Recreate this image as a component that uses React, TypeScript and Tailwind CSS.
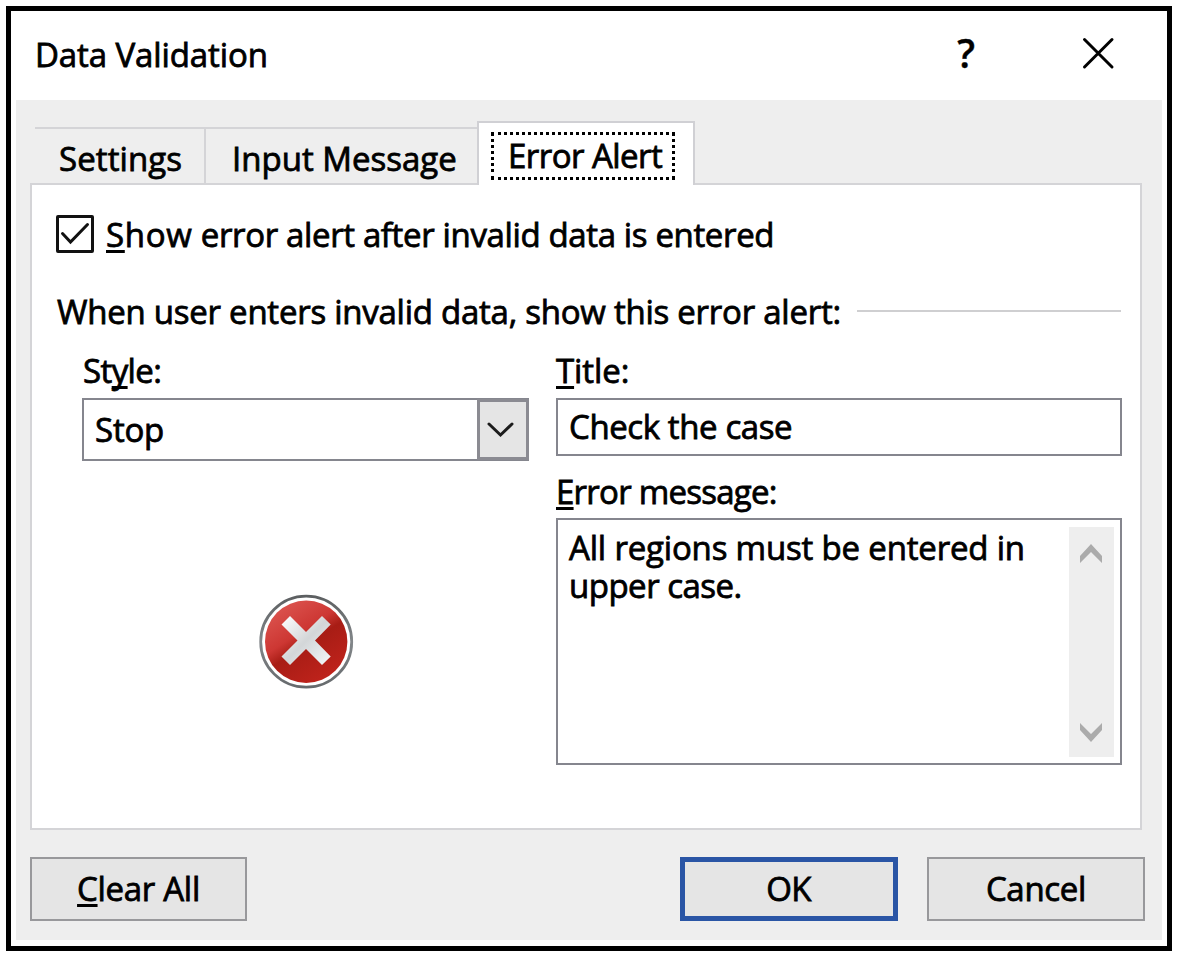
import type { ReactNode } from "react";

function Key({ children }: { children: ReactNode }) {
  return (
    <span className="underline decoration-[3px] underline-offset-[3px] [text-decoration-skip-ink:none]">{children}</span>
  );
}

function TitleBar() {
  return (
    <header className="flex h-[89px] shrink-0 items-start pl-[24px] pt-[21px]">
      <h1 className="w-[920px] shrink-0 tracking-[-0.1px]">Data Validation</h1>
      <button aria-label="Help" className="w-[22px] shrink-0 text-[39px] font-semibold leading-[42px] [-webkit-text-stroke:0.4px_#000]">
        ?
      </button>
      <button aria-label="Close" className="ml-[103px] mt-[3px]">
        <svg width="36" height="36" viewBox="0 0 36 36" fill="none" stroke="#000" strokeWidth="3" strokeLinecap="round">
          <path d="M4.5 4.5 32 32M32 4.5 4.5 32" />
        </svg>
      </button>
    </header>
  );
}

function Tabs() {
  return (
    <div className="flex items-end pl-[5px]">
      <button className="flex h-[56px] w-[171px] items-start border-r-2 border-t-2 border-[#d4d4d7] pl-[24px] pt-[7px] tracking-[0.1px]">
        Settings
      </button>
      <button className="flex h-[56px] w-[271px] items-start whitespace-nowrap border-t-2 border-[#d4d4d7] pl-[26px] pt-[7px]">
        Input Message
      </button>
      <button className="relative -mb-[2px] flex h-[64px] w-[218px] items-start whitespace-nowrap border-2 border-b-0 border-[#d0d0d4] bg-white pl-[12px] pt-[9px] tracking-[-0.54px]">
        <span className="block h-[48px] w-[184px] border-[3px] border-dotted border-black pl-[14px] text-left leading-[42px]">
          Error Alert
        </span>
      </button>
    </div>
  );
}

function StopIcon() {
  return (
    <svg width="96" height="96" viewBox="258 594 96 96">
      <defs>
        <linearGradient id="rim" x1="0" y1="0" x2="0" y2="1">
          <stop offset="0" stopColor="#5c5f61" />
          <stop offset="0.5" stopColor="#83878a" />
          <stop offset="1" stopColor="#65696c" />
        </linearGradient>
        <linearGradient id="red" x1="0.1" y1="0" x2="0.75" y2="1">
          <stop offset="0" stopColor="#df5a55" />
          <stop offset="0.42" stopColor="#cd3733" />
          <stop offset="0.56" stopColor="#a81d15" />
          <stop offset="1" stopColor="#c1231c" />
        </linearGradient>
        <linearGradient id="cross" x1="0" y1="0" x2="1" y2="1">
          <stop offset="0" stopColor="#ffffff" />
          <stop offset="0.5" stopColor="#d3d6d8" />
          <stop offset="1" stopColor="#f4f8fa" />
        </linearGradient>
      </defs>
      <circle cx="306.2" cy="641.7" r="45.5" fill="#fff" stroke="url(#rim)" strokeWidth="2.8" />
      <circle cx="306.2" cy="641.7" r="41.2" fill="url(#red)" />
      <path
        d="M290 616 306 632 322 616 330.7 624.5 315 640.5 330.7 656.5 322 665 306 649 290 665 281.5 656.5 297.5 640.5 281.5 624.5Z"
        fill="url(#cross)"
      />
    </svg>
  );
}

function StyleField() {
  return (
    <div className="flex w-[447px] flex-col">
      <label className="pl-px tracking-[-0.6px]">
        St<Key>y</Key>le:
      </label>
      <div className="mt-[4px] flex h-[63px] border-2 border-r-0 border-[#85868e]">
        <span className="flex-1 pl-[11px] pt-[7px] tracking-[-0.2px]">Stop</span>
        <button aria-label="Open list" className="-my-[1px] flex w-[52px] items-center justify-center border-[3px] border-[#8b8b92] bg-[#e5e5e5] pr-[4px]">
          <svg width="30" height="18" viewBox="0 0 30 18" fill="none" stroke="#1c1c1c" strokeWidth="3" strokeLinecap="round">
            <path d="M3 3 14.5 14 26 3" />
          </svg>
        </button>
      </div>
      <div className="mt-[133px] flex pl-[176px]">
        <StopIcon />
      </div>
    </div>
  );
}

function MessageFields() {
  return (
    <div className="flex w-[566px] flex-col">
      <label className="tracking-[-0.1px]">
        <Key>T</Key>itle:
      </label>
      <div className="mt-[4px] h-[58px] border-2 border-[#85868e] pl-[11px] pt-[4px] tracking-[-0.4px]">Check the case</div>
      <label className="mt-[13px] tracking-[-0.75px]">
        <Key>E</Key>rror message:
      </label>
      <div className="mt-[3px] flex h-[247px] justify-between border-2 border-[#85868e] pl-[11px] pr-[6px] pt-[7px]">
        <div className="pt-[2px] leading-[38px]">
          <div className="tracking-[-0.18px]">All regions must be entered in</div>
          <div className="tracking-[-0.5px]">upper case.</div>
        </div>
        <div className="flex h-[230px] w-[45px] flex-col items-center justify-between bg-[#eee] pb-[15px] pr-[2px] pt-[17px]">
          <svg width="22" height="19" viewBox="0 0 22 19" fill="#ababab">
            <path d="M11 0 22 12V19L11 8 0 19V12Z" />
          </svg>
          <svg width="22" height="19" viewBox="0 0 22 19" fill="#ababab">
            <path d="M11 19 22 7V0L11 11 0 0V7Z" />
          </svg>
        </div>
      </div>
    </div>
  );
}

function Panel() {
  return (
    <section className="h-[647px] w-[1112px] border-2 border-[#d4d4d7] bg-white pl-[24px] pt-[27px]">
      <label className="flex items-start">
        <span className="mr-[12px] mt-[3px] flex h-[38px] w-[38px] items-center justify-center rounded-[2px] border-[3px] border-[#111]">
          <svg width="32" height="32" viewBox="0 0 32 32" fill="none" stroke="#111" strokeWidth="3" strokeLinecap="round">
            <path d="M3.5 15.5 11.5 24 28.5 6.5" />
          </svg>
        </span>
        <span className="tracking-[-0.36px]">
          <span className="tracking-[0.7px]">
            <Key>S</Key>how
          </span>{" "}
          error alert after invalid data is entered
        </span>
      </label>
      <div className="mt-[31px] flex items-center">
        <span className="w-[801px] shrink-0 whitespace-nowrap pl-px tracking-[-0.25px]">
          When user enters invalid data, show this error alert:
        </span>
        <span className="mb-[2px] h-[2px] w-[264px] bg-[#cfcfd1]" />
      </div>
      <div className="mt-[13px] flex gap-[27px] pl-[26px]">
        <StyleField />
        <MessageFields />
      </div>
    </section>
  );
}

function Footer() {
  return (
    <footer className="mt-[27px] flex h-[64px]">
      <button className="flex w-[217px] justify-center border-2 border-[#98989b] bg-[#e5e5e5] pt-[7px] tracking-[-0.3px]">
        <span>
          <Key>C</Key>lear All
        </span>
      </button>
      <button className="ml-[433px] flex w-[218px] justify-center border-[5px] border-[#2a55a5] bg-[#e5e5e5] pr-[1px] pt-[4px] tracking-[-0.6px]">
        OK
      </button>
      <button className="ml-[29px] flex w-[218px] justify-center border-2 border-[#98989b] bg-[#e5e5e5] pt-[7px] tracking-[-0.3px]">
        Cancel
      </button>
    </footer>
  );
}

export default function App() {
  return (
    <div className="h-[960px] w-[1181px] overflow-hidden bg-white pl-[6px] pt-[6px] font-['Open_Sans','Noto_Sans',sans-serif] text-[33px] leading-[46px] text-black [-webkit-text-stroke:0.8px_#000]">
      <main className="flex h-[945px] w-[1166px] flex-col border-[5px] border-black bg-white">
        <TitleBar />
        <div className="mx-[5px] h-[840px] bg-[#eeeeee] pl-[14px] pt-[21px]">
          <Tabs />
          <Panel />
          <Footer />
        </div>
      </main>
    </div>
  );
}
